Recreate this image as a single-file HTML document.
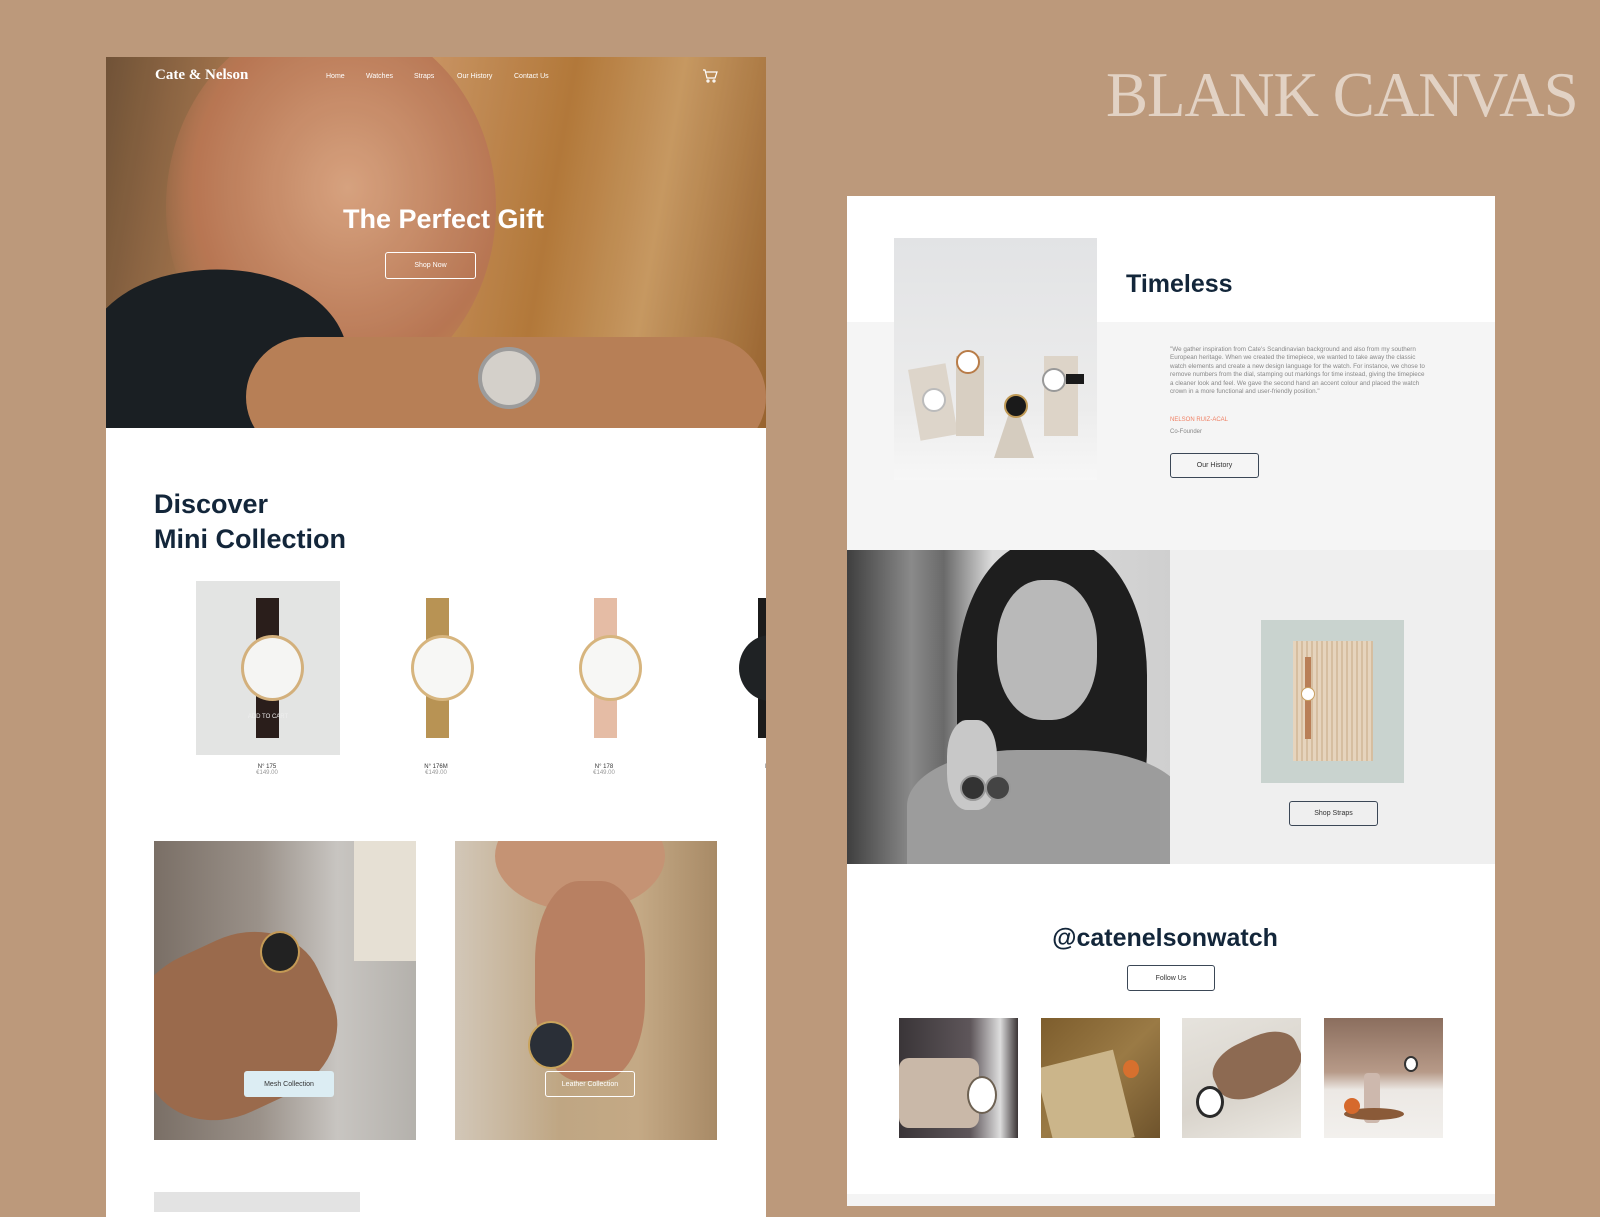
<!DOCTYPE html><html><head><meta charset="utf-8"><style>
*{margin:0;padding:0;box-sizing:border-box}
body{width:1600px;height:1200px;background:#bc997b;position:relative;overflow:hidden;font-family:"Liberation Sans",sans-serif}
.a{position:absolute}
.h{color:#13263a;font-weight:700}
.btn{position:absolute;border:1px solid #3b4756;border-radius:3px;font-size:7px;color:#333;display:flex;align-items:center;justify-content:center;background:transparent}
</style></head><body>
<div class="a" style="left:1106px;top:60px;font-family:'Liberation Serif',serif;font-size:63px;color:#e2d2c4;letter-spacing:-1px;line-height:70px;white-space:nowrap">BLANK CANVAS</div>

<!-- LEFT PANEL -->
<div class="a" style="left:106px;top:57px;width:660px;height:1160px;background:#fff;overflow:hidden">
 <div class="a" style="left:0;top:0;width:660px;height:371px;overflow:hidden;background:linear-gradient(100deg,#7a5a3c 0%,#c68c5c 25%,#d9a06b 45%,#c2833f 65%,#d7a56a 80%,#a56c33 100%)">
  <div class="a" style="left:60px;top:-40px;width:330px;height:380px;border-radius:50%;background:radial-gradient(ellipse at 55% 45%,#e9b08a,#c7805a 60%,rgba(160,100,60,0) 75%)"></div>
  <div class="a" style="left:-20px;top:210px;width:260px;height:180px;border-radius:40% 60% 0 0;background:#1d2226;transform:rotate(-12deg)"></div>
  <div class="a" style="left:140px;top:280px;width:520px;height:120px;border-radius:60px;background:#c78a5e"></div>
  <div class="a" style="left:372px;top:290px;width:62px;height:62px;border-radius:50%;background:#e6e2dc;border:4px solid #aaa"></div>
  <div class="a" style="left:0;top:0;width:660px;height:371px;background:rgba(0,0,0,.08)"></div>
 </div>
 <div class="a" style="left:49px;top:10px;font-family:'Liberation Serif',serif;font-weight:700;color:#fff;font-size:15px">Cate &amp; Nelson</div>
 <div class="a" style="left:220px;top:16px;font-size:7px;color:#fff;width:340px">
  <span class="a" style="left:0">Home</span><span class="a" style="left:40px">Watches</span><span class="a" style="left:88px">Straps</span><span class="a" style="left:131px">Our History</span><span class="a" style="left:188px">Contact Us</span></div>
 <svg class="a" style="left:596px;top:12px" width="16" height="14" viewBox="0 0 16 14" fill="none" stroke="#fff" stroke-width="1.2"><path d="M1 1h2l2 8h8l2-6H4"/><circle cx="6" cy="12" r="1"/><circle cx="12" cy="12" r="1"/></svg>
 <div class="a" style="left:0;width:660px;top:147px;text-align:center;color:#fff;font-weight:700;font-size:27px">&nbsp; The Perfect Gift</div>
 <div class="btn" style="left:279px;top:195px;width:91px;height:27px;border-color:#fff;color:#fff">Shop Now</div>

 <div class="a h" style="left:48px;top:430px;font-size:27px;line-height:35px">Discover<br>Mini Collection</div>

 <div class="a" style="left:90px;top:524px;width:144px;height:174px;background:#e3e4e3"></div>
 <div class="a" style="left:150px;top:541px;width:23px;height:140px;background:#2a1e1b"></div>
 <div class="a" style="left:135px;top:578px;width:63px;height:66px;border-radius:50%;background:#f5f5f3;border:3px solid #d3b07c"></div>
 <div class="a" style="width:60px;text-align:center;font-size:6px;color:#eee;left:132px;top:657px">ADD TO CART</div>
 <div class="a" style="left:320px;top:541px;width:23px;height:140px;background:#b89354"></div>
 <div class="a" style="left:305px;top:578px;width:63px;height:66px;border-radius:50%;background:#f7f7f5;border:3px solid #d7b57e"></div>
 <div class="a" style="left:488px;top:541px;width:23px;height:140px;background:#e5bca5"></div>
 <div class="a" style="left:473px;top:578px;width:63px;height:66px;border-radius:50%;background:#f7f7f5;border:3px solid #d7b57e"></div>
 <div class="a" style="left:652px;top:541px;width:23px;height:140px;background:#1b1b1b"></div>
 <div class="a" style="left:633px;top:578px;width:63px;height:66px;border-radius:50%;background:#1f2224"></div>
 <div class="a" style="font-size:6px;color:#333;left:141px;top:707px;width:40px;text-align:center">N° 175<br><span style="color:#999">€149.00</span></div>
 <div class="a" style="font-size:6px;color:#333;left:310px;top:707px;width:40px;text-align:center">N° 176M<br><span style="color:#999">€149.00</span></div>
 <div class="a" style="font-size:6px;color:#333;left:478px;top:707px;width:40px;text-align:center">N° 178<br><span style="color:#999">€149.00</span></div>
 <div class="a" style="font-size:6px;color:#333;left:645px;top:707px;width:40px;text-align:center">N° 1<br><span style="color:#999">€14</span></div>

 <div class="a" style="left:48px;top:784px;width:262px;height:299px;overflow:hidden;background:linear-gradient(90deg,#7a6f66,#9a9189 40%,#c8c5c1 70%,#b4b1ac)">
  <div class="a" style="left:-20px;top:100px;width:200px;height:170px;border-radius:40%;background:#9a6a4c;transform:rotate(-25deg)"></div>
  <div class="a" style="left:200px;top:0;width:70px;height:120px;background:#e6e0d4"></div>
  <div class="a" style="left:106px;top:90px;width:40px;height:42px;border-radius:50%;background:#222;border:2px solid #c49a55"></div>
  <div class="a" style="left:90px;top:230px;width:90px;height:26px;background:#dcedf3;border-radius:3px;font-size:7px;color:#333;display:flex;align-items:center;justify-content:center">Mesh Collection</div>
 </div>
 <div class="a" style="left:349px;top:784px;width:262px;height:299px;overflow:hidden;background:linear-gradient(90deg,#d2c7b8,#bfa683 40%,#c4a985 70%,#a88a66)">
  <div class="a" style="left:40px;top:-40px;width:170px;height:110px;border-radius:50%;background:#c59374"></div>
  <div class="a" style="left:80px;top:40px;width:110px;height:200px;border-radius:40%;background:#b88062"></div>
  <div class="a" style="left:73px;top:180px;width:46px;height:48px;border-radius:50%;background:#2a2f37;border:2px solid #c9a45c"></div>
  <div class="btn" style="left:90px;top:230px;width:90px;height:26px;border-color:#fff;color:#fff">Leather Collection</div>
 </div>
 <div class="a" style="left:48px;top:1135px;width:206px;height:20px;background:#e3e3e3"></div>
</div>

<!-- RIGHT PANEL -->
<div class="a" style="left:847px;top:196px;width:648px;height:1010px;background:#fff;overflow:hidden">
 <div class="a" style="left:0;top:126px;width:648px;height:228px;background:#f5f5f5"></div>
 <div class="a" style="left:47px;top:42px;width:203px;height:242px;background:linear-gradient(180deg,#e2e3e5,#ececec 70%,#f7f7f7);overflow:hidden">
  <div class="a" style="left:20px;top:128px;width:38px;height:72px;background:#ddd5ca;transform:rotate(-10deg)"></div>
  <div class="a" style="left:62px;top:118px;width:28px;height:80px;background:#d8cfc2"></div>
  <div class="a" style="left:100px;top:160px;width:0;height:0;border-left:20px solid transparent;border-right:20px solid transparent;border-bottom:60px solid #d5ccbf"></div>
  <div class="a" style="left:150px;top:118px;width:34px;height:80px;background:#ddd4c8"></div>
  <div class="a" style="left:28px;top:150px;width:24px;height:24px;border-radius:50%;background:#fff;border:2px solid #bbb"></div>
  <div class="a" style="left:62px;top:112px;width:24px;height:24px;border-radius:50%;background:#fff;border:2px solid #b87c48"></div>
  <div class="a" style="left:110px;top:156px;width:24px;height:24px;border-radius:50%;background:#1a1a1a;border:2px solid #c09a56"></div>
  <div class="a" style="left:148px;top:130px;width:24px;height:24px;border-radius:50%;background:#fff;border:2px solid #999"></div>
  <div class="a" style="left:172px;top:136px;width:18px;height:10px;background:#1a1a1a"></div>
 </div>
 <div class="a h" style="left:279px;top:74px;font-size:25px">Timeless</div>
 <div class="a" style="left:323px;top:150px;width:255px;font-size:6.3px;line-height:8.4px;color:#888">"We gather inspiration from Cate's Scandinavian background and also from my southern European heritage. When we created the timepiece, we wanted to take away the classic watch elements and create a new design language for the watch. For instance, we chose to remove numbers from the dial, stamping out markings for time instead, giving the timepiece a cleaner look and feel. We gave the second hand an accent colour and placed the watch crown in a more functional and user-friendly position."</div>
 <div class="a" style="left:323px;top:221px;font-size:6px;color:#f07f62">NELSON RUIZ-ACAL</div>
 <div class="a" style="left:323px;top:233px;font-size:6px;color:#888">Co-Founder</div>
 <div class="btn" style="left:323px;top:257px;width:89px;height:25px">Our History</div>

 <div class="a" style="left:0;top:354px;width:323px;height:314px;overflow:hidden;background:linear-gradient(90deg,#3f3f3f,#8a8a8a 20%,#6a6a6a 30%,#dcdcdc 45%,#cfcfcf 100%)">
  <div class="a" style="left:110px;top:-10px;width:190px;height:300px;border-radius:45% 45% 30% 30%;background:#1e1e1e"></div>
  <div class="a" style="left:150px;top:30px;width:100px;height:140px;border-radius:45%;background:#b9b9b9"></div>
  <div class="a" style="left:60px;top:200px;width:280px;height:140px;border-radius:40% 40% 0 0;background:#9c9c9c"></div>
  <div class="a" style="left:100px;top:170px;width:50px;height:90px;border-radius:40%;background:#c8c8c8"></div>
  <div class="a" style="left:113px;top:225px;width:26px;height:26px;border-radius:50%;background:#333;border:2px solid #999"></div>
  <div class="a" style="left:138px;top:225px;width:26px;height:26px;border-radius:50%;background:#444;border:2px solid #999"></div>
 </div>
 <div class="a" style="left:323px;top:354px;width:325px;height:314px;background:#efefef"></div>
 <div class="a" style="left:414px;top:424px;width:143px;height:163px;background:#c9d3cf;overflow:hidden">
  <div class="a" style="left:32px;top:21px;width:80px;height:120px;background:repeating-linear-gradient(90deg,#e6d4bd 0 3px,#d6bea0 3px 5px)"></div>
 </div>
 <div class="a" style="left:458px;top:461px;width:6px;height:82px;background:#b97f57"></div>
 <div class="a" style="left:454px;top:491px;width:14px;height:14px;border-radius:50%;background:#fff;border:1px solid #c9a062"></div>
 <div class="btn" style="left:442px;top:605px;width:89px;height:25px">Shop Straps</div>

 <div class="a h" style="left:0;width:636px;top:728px;text-align:center;font-size:25px">@catenelsonwatch</div>
 <div class="btn" style="left:280px;top:769px;width:88px;height:26px">Follow Us</div>
 <div class="a" style="left:52px;top:822px;width:119px;height:120px;overflow:hidden;background:linear-gradient(90deg,#3a3538,#5e565a 60%,#ddd 85%,#3a3435)"><div class="a" style="left:0;top:40px;width:80px;height:70px;background:#c9b8a8;border-radius:10px"></div><div class="a" style="left:68px;top:58px;width:30px;height:38px;border-radius:50%;background:#fff;border:2px solid #6d6152"></div></div>
 <div class="a" style="left:194px;top:822px;width:119px;height:120px;overflow:hidden;background:linear-gradient(135deg,#7d5d2d,#9a7a45 50%,#6e532c)"><div class="a" style="left:4px;top:40px;width:80px;height:90px;background:#cbb58a;transform:rotate(-14deg)"></div><div class="a" style="left:82px;top:42px;width:16px;height:18px;border-radius:50%;background:#d7702e"></div></div>
 <div class="a" style="left:335px;top:822px;width:119px;height:120px;overflow:hidden;background:linear-gradient(160deg,#e6e3dd,#d9d4cc 60%,#ece9e3)"><div class="a" style="left:30px;top:20px;width:90px;height:55px;border-radius:40%;background:#8d6a52;transform:rotate(-25deg)"></div><div class="a" style="left:14px;top:68px;width:28px;height:32px;border-radius:50%;background:#fff;border:3px solid #2a2a2a"></div></div>
 <div class="a" style="left:477px;top:822px;width:119px;height:120px;overflow:hidden;background:linear-gradient(180deg,#8b6e5e,#b79a88 45%,#ece8e4 60%,#f2f0ed)"><div class="a" style="left:40px;top:55px;width:16px;height:50px;background:#cdb8ad;border-radius:4px"></div><div class="a" style="left:20px;top:90px;width:60px;height:12px;background:#8a5a38;border-radius:50%"></div><div class="a" style="left:20px;top:80px;width:16px;height:16px;border-radius:50%;background:#d6692c"></div><div class="a" style="left:80px;top:38px;width:14px;height:16px;border-radius:50%;background:#fff;border:2px solid #333"></div></div>
 <div class="a" style="left:0;top:998px;width:648px;height:20px;background:#f4f4f4"></div>
</div>
</body></html>
